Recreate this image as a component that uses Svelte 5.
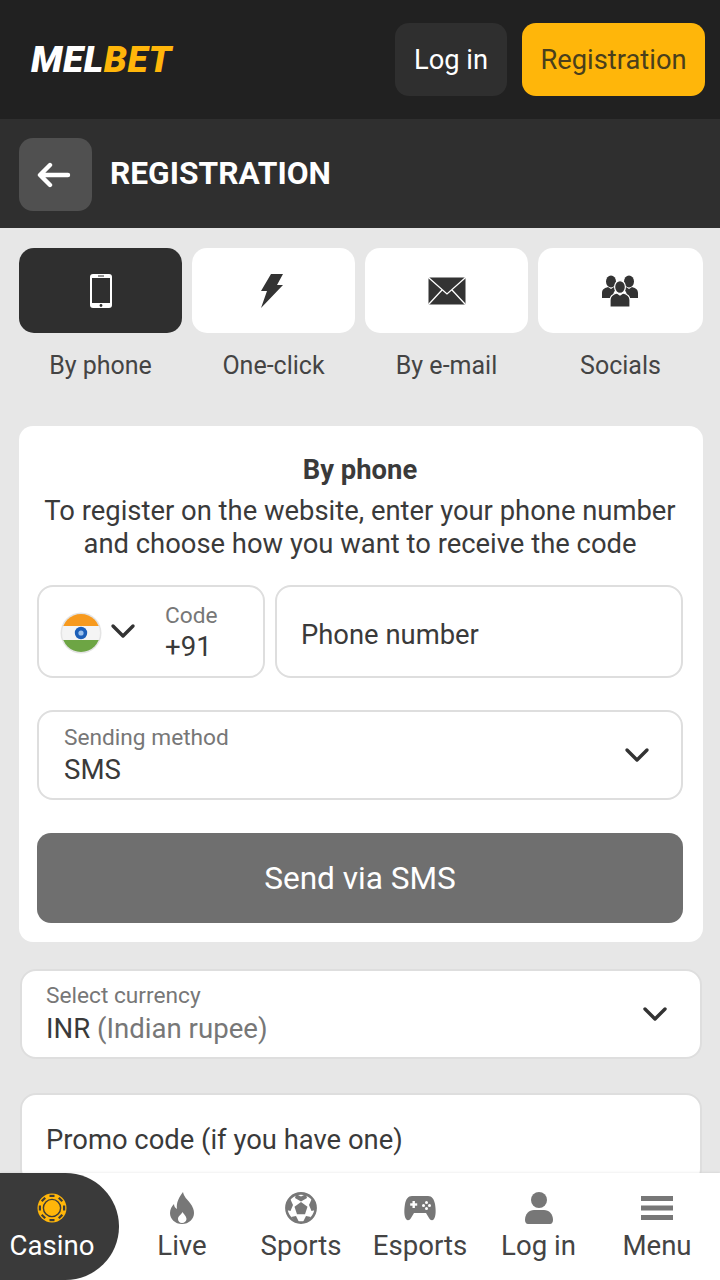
<script>
  const tabs = [
    { key: 'phone', label: 'By phone', active: true },
    { key: 'click', label: 'One-click' },
    { key: 'mail', label: 'By e-mail' },
    { key: 'social', label: 'Socials' }
  ];
  const nav = [
    { key: 'casino', label: 'Casino', width: 119, active: true },
    { key: 'live', label: 'Live', width: 126 },
    { key: 'sports', label: 'Sports', width: 112 },
    { key: 'esports', label: 'Esports', width: 126 },
    { key: 'login', label: 'Log in', width: 111 },
    { key: 'menu', label: 'Menu', width: 126 }
  ];
</script>

{#snippet chevron()}
  <svg class="chevron" width="26" height="16" viewBox="0 0 26 16" fill="none" stroke="#333" stroke-width="3.4" stroke-linecap="round" stroke-linejoin="round">
    <path d="M3 3l10 10L23 3" />
  </svg>
{/snippet}

<div class="page">
  <header class="top">
    <div class="logo"><span class="mel">MEL</span><span class="bet">BET</span></div>
    <div class="top-actions">
      <button class="btn-login">Log in</button>
      <button class="btn-reg">Registration</button>
    </div>
  </header>

  <div class="subhead">
    <button class="back" aria-label="Back">
      <svg width="34" height="26" viewBox="0 0 34 26" fill="none" stroke="#fff" stroke-width="4.4" stroke-linecap="round" stroke-linejoin="round">
        <path d="M31 13H4M13 3L3 13l10 10" />
      </svg>
    </button>
    <h1>REGISTRATION</h1>
  </div>

  <main>
    <div class="tabs">
      {#each tabs as tab}
        <div class="tab">
          <div class="tab-box" class:active={tab.active}>
            {#if tab.key === 'phone'}
              <svg width="24" height="36" viewBox="0 0 24 36">
                <rect x="1" y="1" width="22" height="34" rx="3" fill="#fff" />
                <rect x="3" y="5" width="18" height="25" fill="#2f2f2f" />
                <circle cx="12" cy="32.5" r="1.4" fill="#2f2f2f" />
                <rect x="9" y="2.5" width="6" height="1" fill="#2f2f2f" />
              </svg>
            {:else if tab.key === 'click'}
              <svg class="bolt" width="24" height="36" viewBox="0 0 24 36" fill="#333">
                <path d="M11 1h12l-6 11h6L1 35l6-17H1z" />
              </svg>
            {:else if tab.key === 'mail'}
              <svg width="38" height="28" viewBox="0 0 38 28">
                <rect x="0.5" y="0.5" width="37" height="27" rx="1.5" fill="#333" />
                <path d="M1 1l18 16L37 1M1 27l13-14M37 27L24 13" fill="none" stroke="#fff" stroke-width="1.3" />
              </svg>
            {:else}
              <svg class="people" width="38" height="32" viewBox="0 0 38 32" fill="#333">
                <ellipse cx="10" cy="6.5" rx="5" ry="6" />
                <ellipse cx="28" cy="6.5" rx="5" ry="6" />
                <path d="M1 23v-5c0-4 3-5 6-6l3 2 3-2 3 1-3 4-2 6z" />
                <path d="M37 23v-5c0-4-3-5-6-6l-3 2-3-2-3 1 3 4 2 6z" />
                <ellipse cx="19" cy="12" rx="5.4" ry="6.4" fill="#333" stroke="#fff" stroke-width="1.2" />
                <path d="M9 32v-7c0-4 3-6 7-7l3 2 3-2c4 1 7 3 7 7v7z" stroke="#fff" stroke-width="1.2" />
              </svg>
            {/if}
          </div>
          <span class="tab-label">{tab.label}</span>
        </div>
      {/each}
    </div>

    <section class="card">
      <h2>By phone</h2>
      <p>To register on the website, enter your phone number and choose how you want to receive the code</p>

      <div class="phone-row">
        <div class="field code">
          <svg class="flag" width="42" height="42" viewBox="0 0 42 42">
            <defs>
              <clipPath id="round"><circle cx="21" cy="21" r="19" /></clipPath>
            </defs>
            <circle cx="21" cy="21" r="20.5" fill="#e4e4e4" />
            <g clip-path="url(#round)">
              <rect x="0" y="0" width="42" height="14" fill="#f79a1e" />
              <rect x="0" y="14" width="42" height="14" fill="#f4f4f4" />
              <rect x="0" y="28" width="42" height="14" fill="#6da544" />
            </g>
            <circle cx="21" cy="21" r="6.2" fill="#1c5fb8" />
            <circle cx="21" cy="21" r="2.6" fill="#9cc1ec" />
          </svg>
          {@render chevron()}
          <div class="code-text">
            <span class="small">Code</span>
            <span class="value">+91</span>
          </div>
        </div>
        <div class="field number">Phone number</div>
      </div>

      <div class="field select method">
        <div class="stack">
          <span class="small">Sending method</span>
          <span class="value">SMS</span>
        </div>
        {@render chevron()}
      </div>

      <button class="send">Send via SMS</button>
    </section>

    <div class="field select currency">
      <div class="stack">
        <span class="small">Select currency</span>
        <span class="value">INR <span class="muted">(Indian rupee)</span></span>
      </div>
      {@render chevron()}
    </div>

    <div class="field promo">Promo code (if you have one)</div>
  </main>

  <nav class="bottom">
    {#each nav as item}
      <div class="nav-item" class:active={item.active} style="width: {item.width}px">
        <span class="nav-icon">
          {#if item.key === 'casino'}
            <svg width="30" height="30" viewBox="0 0 30 30">
              <circle cx="15" cy="15" r="14.5" fill="#ffb60a" />
              <circle cx="15" cy="15" r="8.6" fill="none" stroke="#3a3a3a" stroke-width="1.4" />
              <g fill="#3a3a3a">
                <rect x="12.5" y="1.8" width="5" height="2.2" />
                <rect x="12.5" y="26" width="5" height="2.2" />
                <rect x="1.8" y="12.5" width="2.2" height="5" />
                <rect x="26" y="12.5" width="2.2" height="5" />
                <rect x="12.5" y="1.8" width="5" height="2.2" transform="rotate(45 15 15)" />
                <rect x="12.5" y="26" width="5" height="2.2" transform="rotate(45 15 15)" />
                <rect x="1.8" y="12.5" width="2.2" height="5" transform="rotate(45 15 15)" />
                <rect x="26" y="12.5" width="2.2" height="5" transform="rotate(45 15 15)" />
              </g>
            </svg>
          {:else if item.key === 'live'}
            <svg width="24" height="32" viewBox="0 0 24 32">
              <path d="M13 0c1 5 4 7 7 11 3 4 4 7 4 10 0 6-5 11-12 11S0 27 0 21c0-4 2-7 4-9 0 2 1 4 3 5C6 11 9 5 13 0z" fill="#777" />
              <path d="M12.5 20c1 2 4 4 4 7 0 2-2 4-4.500 4S8 29 8 27c0-3 3-4 4.500-7z" fill="#fff" />
            </svg>
          {:else if item.key === 'sports'}
            <svg width="32" height="32" viewBox="0 0 32 32">
              <circle cx="16" cy="16" r="14.600" fill="#fff" stroke="#777" stroke-width="2.600" />
              <g fill="#777">
                <path d="M16 10l6.500 4.700-2.500 7.600h-8L9.500 14.700z" />
                <path d="M11 2l5 2.500L21 2l1 4-6 3.500L10 6z" />
                <path d="M1.500 18L2 10l3.500-2.500L8 13l-2.500 6z" />
                <path d="M30.500 18L30 10l-3.500-2.500L24 13l2.500 6z" />
                <path d="M6 25l5-1 3 6-3.500 0z" />
                <path d="M26 25l-5-1-3 6 3.500 0z" />
              </g>
            </svg>
          {:else if item.key === 'esports'}
            <svg width="32" height="26" viewBox="0 0 32 26">
              <path d="M8 1h16c4 0 6 3 7 8 1 6 1 12-1 15-1.500 2-3.500 1.500-5-1l-3-5H10l-3 5c-1.500 2.500-3.500 3-5 1C0 21 0 15 1 9c1-5 3-8 7-8z" fill="#777" />
              <g fill="#fff">
                <rect x="8.500" y="6" width="2.400" height="7" />
                <rect x="6.200" y="8.300" width="7" height="2.400" />
                <circle cx="19.500" cy="10.500" r="1.500" />
                <circle cx="22.500" cy="7.500" r="1.500" />
                <circle cx="25.500" cy="10.500" r="1.500" />
                <circle cx="22.500" cy="13.500" r="1.500" />
              </g>
            </svg>
          {:else if item.key === 'login'}
            <svg width="28" height="32" viewBox="0 0 28 32" fill="#777">
              <circle cx="14" cy="8" r="8" />
              <path d="M0 28c0-6 4-10 9-10h10c5 0 9 4 9 10 0 2-1 4-3 4H3c-2 0-3-2-3-4z" />
            </svg>
          {:else}
            <svg width="32" height="24" viewBox="0 0 32 24" fill="#777">
              <rect y="0" width="32" height="5" />
              <rect y="9.500" width="32" height="5" />
              <rect y="19" width="32" height="5" />
            </svg>
          {/if}
        </span>
        <span class="nav-label">{item.label}</span>
      </div>
    {/each}
  </nav>
</div>

<style>
  :global(body) {
    margin: 0;
    background: #e7e7e7;
  }
  * {
    box-sizing: border-box;
  }
  .page {
    width: 720px;
    height: 1280px;
    overflow: hidden;
    position: relative;
    font-family: Roboto, "Liberation Sans", sans-serif;
    color: #3a3a3a;
    background: #e7e7e7;
  }
  button {
    font-family: inherit;
    border: 0;
    cursor: pointer;
  }
  .top {
    height: 119px;
    background: #212121;
    display: flex;
    align-items: center;
    justify-content: space-between;
    padding: 0 15px 0 31px;
  }
  .logo {
    font-family: Roboto, sans-serif;
    font-weight: 900;
    font-style: italic;
    font-size: 37px;
    letter-spacing: 0.6px;
    line-height: 1;
  }
  .mel {
    color: #fff;
  }
  .bet {
    color: #ffb60a;
  }
  .top-actions {
    display: flex;
    gap: 15px;
  }
  .btn-login,
  .btn-reg {
    height: 73px;
    border-radius: 14px;
    font-size: 27.3px;
  }
  .btn-login {
    width: 112px;
    background: #2f2f2f;
    color: #fff;
  }
  .btn-reg {
    width: 183px;
    background: #ffb60a;
    color: #4a3f1c;
  }
  .subhead {
    height: 109px;
    background: #2f2f2f;
    display: flex;
    align-items: center;
    gap: 18px;
    padding: 2px 0 0 19px;
  }
  .back {
    width: 73px;
    height: 73px;
    border-radius: 14px;
    background: #505050;
    display: flex;
    align-items: center;
    justify-content: center;
    padding: 0 4px 0 0;
  }
  h1 {
    margin: 0 0 2px;
    font-size: 31.7px;
    font-weight: 700;
    color: #fff;
  }
  main {
    padding: 20px 17px 0 19px;
  }
  .tabs {
    display: grid;
    grid-template-columns: 163px 163px 163px 165px;
    gap: 10px;
  }
  .tab {
    display: flex;
    flex-direction: column;
    align-items: center;
    gap: 17px;
  }
  .tab-box {
    width: 100%;
    height: 85px;
    border-radius: 15px;
    background: #fff;
    display: flex;
    align-items: center;
    justify-content: center;
  }
  .tab-box.active {
    background: #2f2f2f;
  }
  .bolt {
    margin-right: 3px;
  }
  .people {
    margin-right: 2px;
  }
  .tab-label {
    font-size: 25px;
    line-height: 32px;
    color: #444;
  }
  .card {
    margin-top: 44px;
    width: 684px;
    height: 516px;
    background: #fff;
    border-radius: 14px;
    padding: 28px 20px 0 18px;
  }
  h2 {
    margin: 0;
    font-size: 27.4px;
    line-height: 33px;
    font-weight: 700;
    text-align: center;
  }
  p {
    margin: 8px 0 0;
    font-size: 27.4px;
    line-height: 33px;
    text-align: center;
  }
  .field {
    border: 2px solid #dedede;
    border-radius: 16px;
    background: #fff;
    display: flex;
    align-items: center;
  }
  .small {
    font-size: 22.7px;
    line-height: 30px;
    color: #777;
  }
  .value {
    font-size: 27.6px;
    line-height: 31px;
    color: #3a3a3a;
  }
  .muted {
    color: #777;
  }
  .stack,
  .code-text {
    display: flex;
    flex-direction: column;
  }
  .code-text {
    margin: 0 0 1px 29px;
  }
  .stack {
    padding-bottom: 3px;
  }
  .stack .value {
    margin-top: 1px;
  }
  .phone-row {
    display: flex;
    gap: 10px;
    margin-top: 24px;
    height: 93px;
  }
  .code {
    width: 228px;
    padding-left: 21px;
  }
  .flag {
    flex: none;
    margin-top: 2px;
  }
  .code .chevron {
    margin: 0 0 2px 8px;
  }
  .number {
    flex: 1;
    padding: 6px 0 0 24px;
    font-size: 27.4px;
  }
  .select {
    justify-content: space-between;
    padding: 0 32px 0 24px;
  }
  .method {
    margin-top: 32px;
    height: 90px;
    padding: 0 31px 0 25px;
  }
  .send {
    display: block;
    width: 100%;
    height: 90px;
    margin-top: 33px;
    border-radius: 14px;
    background: #6f6f6f;
    color: #fff;
    font-size: 31.6px;
  }
  .currency {
    margin: 27px 0 0 1px;
    width: 682px;
    height: 90px;
  }
  .currency .value {
    margin-top: 2px;
  }
  .promo {
    margin: 34px 0 0 1px;
    width: 682px;
    height: 92px;
    padding: 2px 0 0 24px;
    font-size: 27.4px;
  }
  .bottom {
    position: absolute;
    left: 0;
    bottom: 0;
    width: 720px;
    height: 107px;
    background: #fff;
    display: flex;
    box-shadow: 0 -1px 2px rgba(0, 0, 0, 0.06);
  }
  .nav-item {
    display: flex;
    flex-direction: column;
    align-items: center;
    padding-top: 18px;
    color: #444;
  }
  .nav-item.active {
    background: #3a3a3a;
    color: #fff;
    border-radius: 0 56px 56px 0;
    padding-right: 15px;
  }
  .nav-icon {
    height: 34px;
    display: flex;
    align-items: center;
    justify-content: center;
  }
  .nav-label {
    margin-top: 3px;
    font-size: 27.6px;
    line-height: 36px;
  }
</style>
